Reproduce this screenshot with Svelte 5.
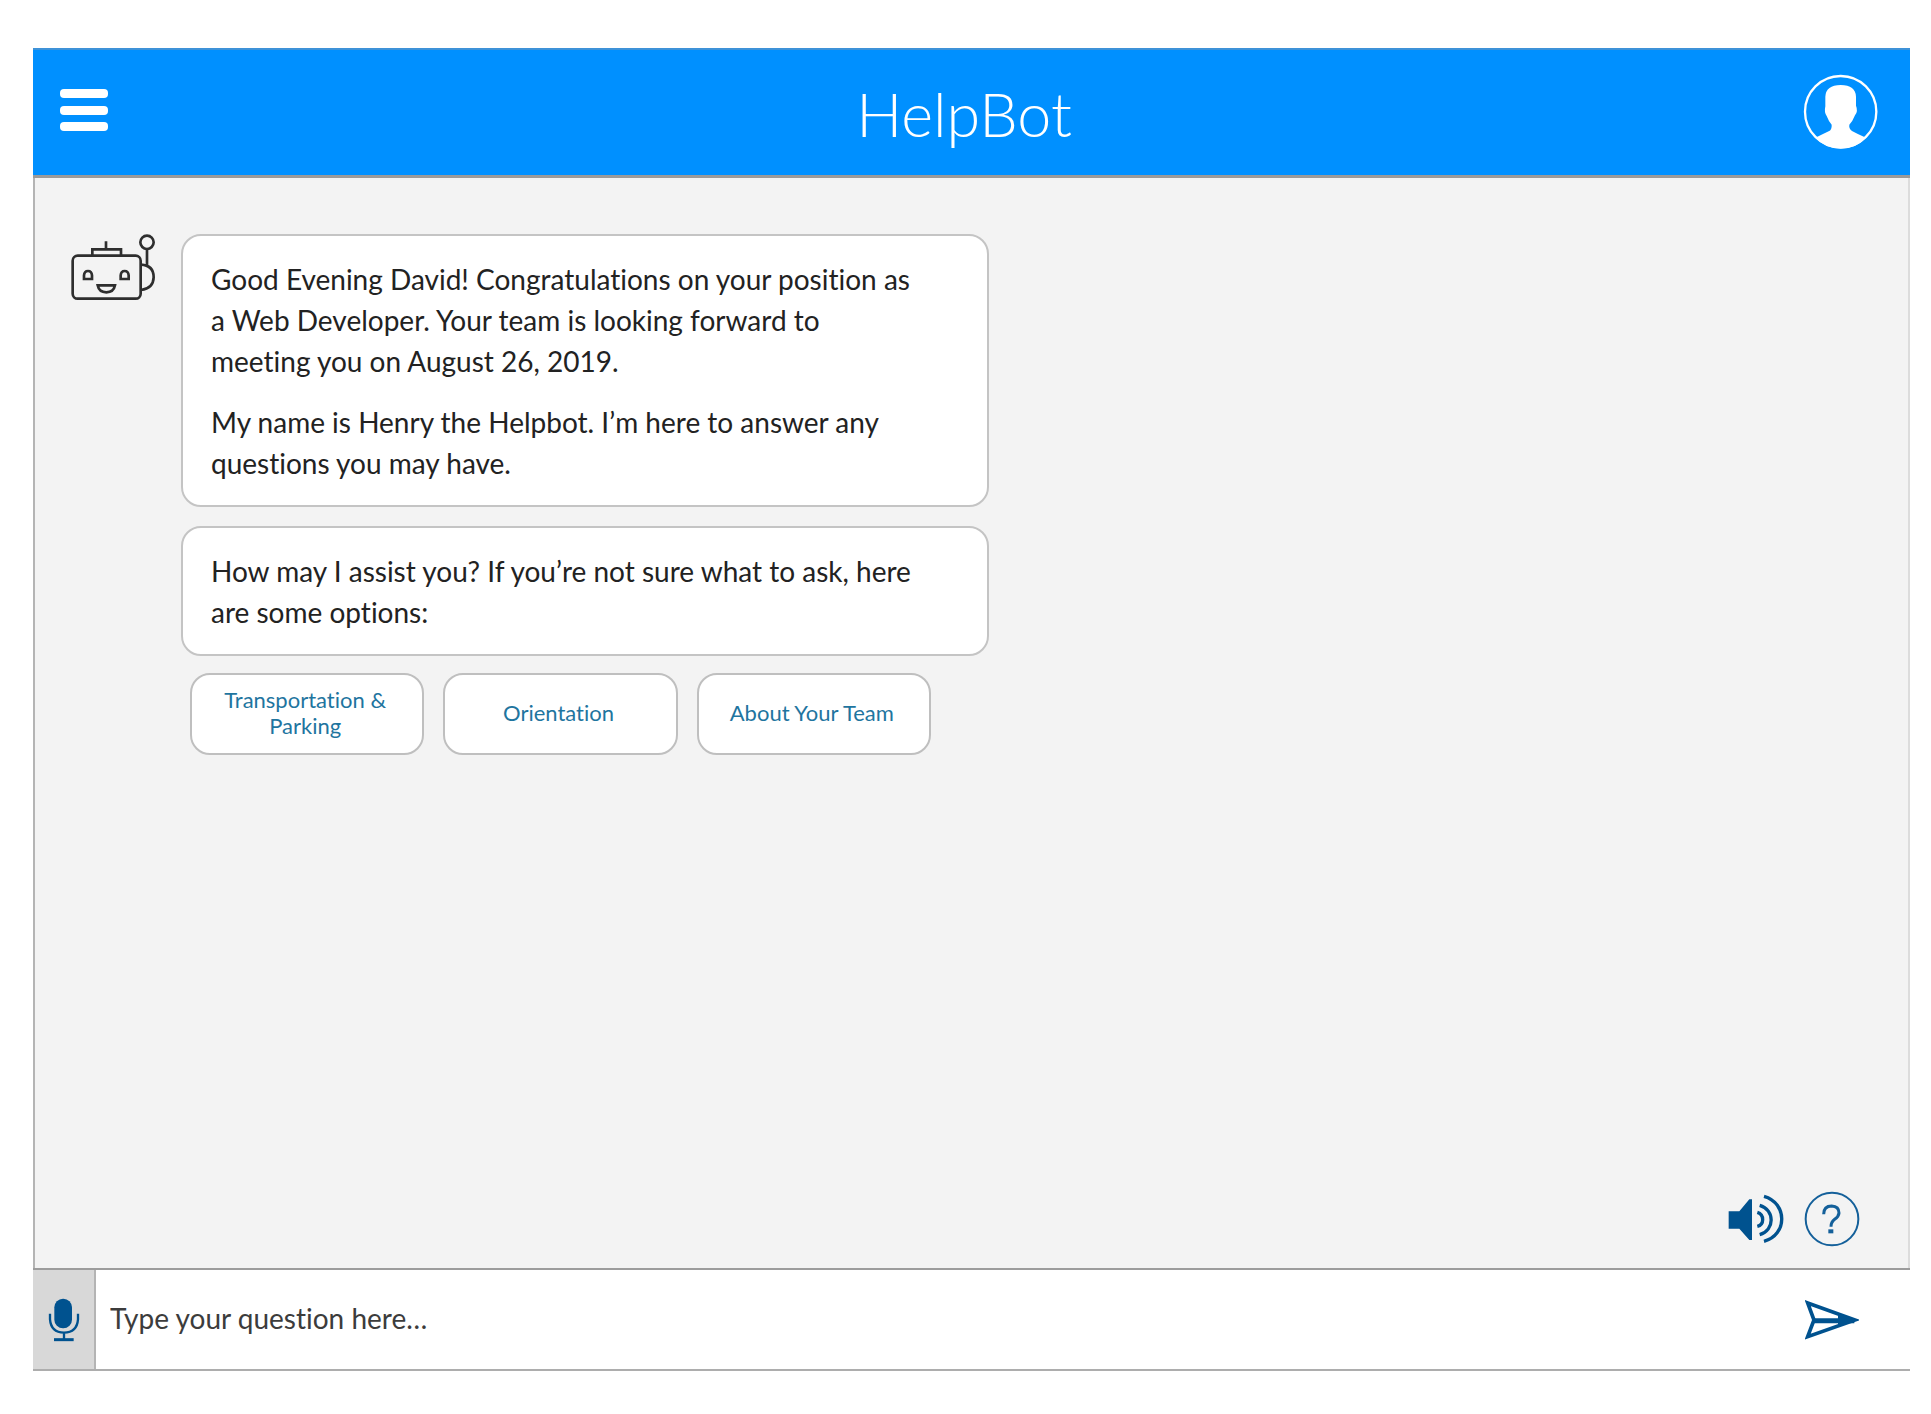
<script>
  let question = $state('');
  const options = ['Transportation & Parking', 'Orientation', 'About Your Team'];
</script>

<div class="page">
  <div class="frame">
    <header>
      <button class="icon-button menu" aria-label="Menu">
        <svg width="48" height="42" viewBox="0 0 48 42" fill="#fff">
          <rect x="0" y="0" width="48" height="9" rx="4" />
          <rect x="0" y="17" width="48" height="9" rx="4" />
          <rect x="0" y="33" width="48" height="9" rx="4" />
        </svg>
      </button>
      <h1>HelpBot</h1>
      <button class="icon-button profile" aria-label="Profile">
        <svg width="75" height="76" viewBox="127 100 225 228">
          <circle cx="240" cy="213" r="107" fill="none" stroke="#fff" stroke-width="7" />
          <path
            fill="#fff"
            d="M164 291 Q188 280 204 272 Q214 268 213 252 Q204 242 198 226 Q190 215 194 197 V168 Q196 133 240 133 Q285 134 286 168 V195 Q293 212 283 224 Q276 242 266 252 Q264 264 274 271 Q292 281 316 291 Q286 324 240 324 Q194 323 164 291 Z"
          />
        </svg>
      </button>
    </header>

    <main>
      <div class="conversation">
        <svg class="bot" width="86" height="67" viewBox="60 42 258 201" fill="none" stroke="#2e2e2e" stroke-width="8">
          <rect x="68" y="107" width="204" height="129" rx="15" />
          <path d="M127 107 V88 H213 V107 M168 87 V64" />
          <circle cx="291" cy="67" r="20" />
          <path d="M291 87 V137 M273 134 Q311 136 311 172 Q310 206 273 210" />
          <path d="M102 177 V166 Q103 153 114 153 Q125 153 126 166 V177 Z" />
          <path d="M212 177 V166 Q213 153 224 153 Q235 153 236 166 V177 Z" />
          <path d="M143 196 H195 Q191 217 169 217 Q147 217 143 196 Z" />
        </svg>
        <div class="messages">
          <section class="bubble greeting">
            <p>
              Good Evening David! Congratulations on your position as a Web Developer. Your team is
              looking forward to meeting you on August 26, 2019.
            </p>
            <p>My name is Henry the Helpbot. I’m here to answer any questions you may have.</p>
          </section>
          <section class="bubble prompt">
            <p>How may I assist you? If you’re not sure what to ask, here are some options:</p>
          </section>
          <div class="options">
            {#each options as option}
              <button class="option">{option}</button>
            {/each}
          </div>
        </div>
      </div>

      <div class="tools">
        <button class="icon-button" aria-label="Sound">
          <svg width="56" height="50" viewBox="86 72 168 150" fill="none" stroke="#00528f" stroke-width="10">
            <path fill="#00528f" stroke="none" d="M88 124 H120 L150 88 H158 V210 H150 L120 176 H88 Z" />
            <path d="M174 127 Q190 132 190 149 Q190 165 174 169" />
            <path d="M181 106 C227 119 227 181 181 194" />
            <path d="M194 79 C265 99 265 195 194 214" />
          </svg>
        </button>
        <button class="icon-button" aria-label="Help">
          <svg width="56" height="56" viewBox="312 64 168 168" fill="none" stroke="#14609a">
            <circle cx="396" cy="148" r="79" stroke-width="6" />
            <path stroke-width="9" d="M371 134 Q371 109 395 109 Q417 110 417 130 Q416 141 404 149 Q393 157 393 171" />
            <path stroke-width="12" d="M385 185 H400" />
          </svg>
        </button>
      </div>
    </main>

    <form onsubmit={(e) => e.preventDefault()}>
      <button type="button" class="icon-button mic" aria-label="Speak">
        <svg width="32" height="44" viewBox="86 144 96 132" fill="none" stroke="#00528f" stroke-width="7">
          <rect x="105" y="146" width="53" height="89" rx="26" fill="#00528f" stroke="none" />
          <path d="M92 191 V208 Q95 247 134 248 Q173 247 176 208 V191 M134 248 V268" />
          <path stroke-width="9" d="M104 269 H163" />
        </svg>
      </button>
      <input type="text" bind:value={question} placeholder="Type your question here…" aria-label="Your question" />
      <button type="submit" class="icon-button send" aria-label="Send">
        <svg width="54" height="40" viewBox="316 391 162 120" fill="none" stroke="#00528f" stroke-width="11">
          <path d="M324 400 L466 451 L324 501 L343 451 Z" />
          <path stroke-width="15" d="M343 453 H464" />
          <path fill="#00528f" stroke="none" d="M415 432 L476 451 L415 470 Z" />
        </svg>
      </button>
    </form>
  </div>
</div>

<style>
  :global(body) {
    background: #fff;
  }
  .page {
    box-sizing: border-box;
    min-height: 100vh;
    padding: 48px 21px 43px 33px;
    display: flex;
    font-family: Lato, 'Open Sans', sans-serif;
    font-variant-ligatures: none;
    color: #222;
  }
  .frame {
    flex: 1;
    display: flex;
    flex-direction: column;
    min-width: 0;
  }
  button,
  input {
    font: inherit;
    font-variant-ligatures: none;
    color: inherit;
  }
  .icon-button {
    display: flex;
    align-items: center;
    justify-content: center;
    padding: 0;
    border: 0;
    background: none;
    cursor: pointer;
  }
  header {
    display: grid;
    grid-template-columns: 1fr auto 1fr;
    align-items: center;
    box-sizing: border-box;
    height: 130px;
    padding: 0 32px 0 27px;
    background: #0090ff;
    border-top: 2px solid #3d92d8;
    border-bottom: 3px solid #9a9a9a;
  }
  .menu {
    justify-self: start;
    padding-bottom: 6px;
  }
  .profile {
    justify-self: end;
    padding-bottom: 2px;
  }
  h1 {
    margin: 0;
    padding: 2px 10px 0 0;
    font-size: 61px;
    line-height: 72px;
    font-weight: 300;
    color: #fff;
  }
  main {
    flex: 1;
    display: flex;
    flex-direction: column;
    justify-content: space-between;
    gap: 24px;
    padding: 56px 48px 21px 35px;
    background: #f3f3f3;
    border-left: 2px solid #b4b4b4;
    border-right: 2px solid #dcdcdc;
  }
  .conversation {
    display: flex;
    align-items: flex-start;
    gap: 25px;
  }
  .bot {
    flex: none;
  }
  .messages {
    flex: 1;
    max-width: 808px;
  }
  .bubble {
    box-sizing: border-box;
    padding: 23px 64px 21px 28px;
    background: #fff;
    border: 2px solid #c4c4c4;
    border-radius: 20px;
    font-size: 28px;
    line-height: 41px;
  }
  .bubble p {
    margin: 0;
  }
  .bubble p + p {
    margin-top: 20px;
  }
  .prompt {
    margin-top: 19px;
  }
  .options {
    display: flex;
    gap: 19px;
    margin: 17px 58px 0 9px;
  }
  .option {
    flex: 1;
    min-height: 82px;
    padding: 0 24px 2px 20px;
    background: #fff;
    border: 2px solid #bfbfbf;
    border-radius: 20px;
    font-size: 22px;
    line-height: 26px;
    color: #1f759f;
    cursor: pointer;
  }
  .tools {
    display: flex;
    align-items: center;
    justify-content: flex-end;
    gap: 20px;
  }
  form {
    display: flex;
    box-sizing: border-box;
    height: 103px;
    border-top: 2px solid #9c9c9c;
    border-bottom: 2px solid #adadad;
    background: #fff;
  }
  .mic {
    width: 63px;
    background: #d8d8d8;
    border-right: 2px solid #b4b4b4;
  }
  input {
    flex: 1;
    min-width: 0;
    padding: 0 14px 4px;
    border: 0;
    background: none;
    font-size: 28px;
    outline: none;
  }
  input::placeholder {
    color: #3c3c3c;
    opacity: 1;
  }
  .send {
    padding: 0 51px 0 20px;
  }
</style>
